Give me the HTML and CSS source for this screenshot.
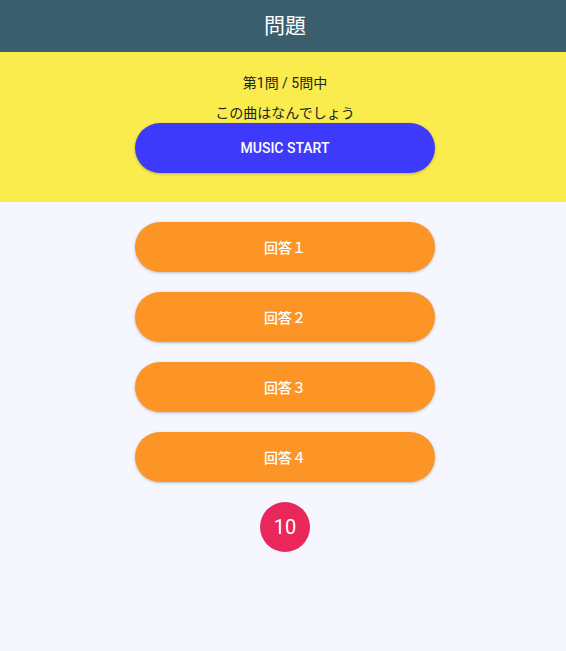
FILE: index.html
```html
<!DOCTYPE html>
<html lang="ja">
<head>
<meta charset="utf-8">
<link rel="stylesheet" href="styles.css">
</head>
<body>
<header class="bar"><h1 class="title">問題</h1></header>
<section class="question">
  <p class="count">第1問 / 5問中</p>
  <p class="prompt">この曲はなんでしょう</p>
  <button class="btn btn-start">MUSIC START</button>
</section>
<section class="answers">
  <button class="btn btn-answer">回答１</button>
  <button class="btn btn-answer">回答２</button>
  <button class="btn btn-answer">回答３</button>
  <button class="btn btn-answer">回答４</button>
  <div class="timer">10</div>
</section>
</body>
</html>
```
FILE: styles.css
```css
html, body { margin: 0; padding: 0; }
body {
  background: #f6f7fe;
  font-family: Roboto, "Noto Sans CJK JP", sans-serif;
  height: 651px;
}
.bar {
  height: 52px;
  background: #3a5e6e;
  display: flex;
  align-items: center;
  justify-content: center;
  padding-left: 4px;
}
.title {
  margin: 0;
  color: #fff;
  font-size: 21px;
  font-weight: 400;
  line-height: 24px;
}
.question {
  background: #f9ec4c;
  height: 150px;
  box-sizing: border-box;
  padding-top: 21px;
  padding-left: 4px;
  display: flex;
  flex-direction: column;
  align-items: center;
}
.count, .prompt {
  margin: 0;
  font-size: 14px;
  line-height: 20px;
  color: #222;
}
.prompt { margin-top: 10px; }
.btn {
  width: 300px;
  height: 50px;
  border: none;
  border-radius: 25px;
  color: #fff;
  font-family: Roboto, "Noto Sans CJK JP", sans-serif;
  font-size: 14px;
  font-weight: 500;
  box-shadow: 0 1px 3px rgba(0,0,0,0.25);
  padding: 0;
}
.btn-start { background: #3e3afc; }
.answers {
  display: flex;
  flex-direction: column;
  align-items: center;
  gap: 20px;
  padding-top: 20px;
  padding-left: 4px;
}
.btn-answer { background: #fd9426; }
.timer {
  width: 50px;
  height: 50px;
  border-radius: 50%;
  background: #e9275a;
  color: #fff;
  font-size: 20px;
  display: flex;
  align-items: center;
  justify-content: center;
}
```
